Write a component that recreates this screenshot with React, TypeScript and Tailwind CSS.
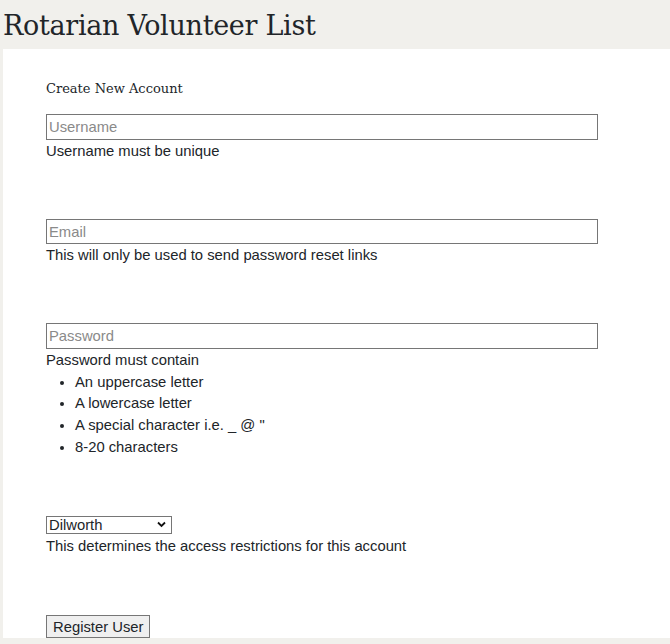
import { useState } from "react";

const sans = "font-['Helvetica_Neue','Liberation_Sans',Arial,sans-serif]";
const slab = "font-['DejaVu_Serif','Liberation_Serif',serif]";

export default function App() {
  const [branch, setBranch] = useState("Dilworth");

  return (
    <div className="min-h-[644px] bg-[#f1f0ec] text-[#212529]">
      {/* Header */}
      <h1 className={`${slab} h-[49px] pl-[3px] pt-[8px] text-[27px] leading-[36px] tracking-[-0.3px]`}>
        Rotarian Volunteer List
      </h1>

      {/* Form panel */}
      <div className={`${sans} ml-[3px] bg-white pl-[43px] pt-[29px] text-[14.8px] leading-[21.7px]`}>
        <p className={`${slab} mb-[14px] text-[13px] leading-[21.6px]`}>Create New Account</p>

        <div className="mb-[57px]">
          <input
            type="text"
            placeholder="Username"
            className="block h-[26px] w-[552px] border border-[#767676] px-[2px] text-[14.8px] outline-none placeholder:text-[#8a8a8a]"
          />
          <p className="mt-[1px]">Username must be unique</p>
        </div>

        <div className="mb-[56px]">
          <input
            type="email"
            placeholder="Email"
            className="block h-[25px] w-[552px] border border-[#767676] px-[2px] text-[14.8px] outline-none placeholder:text-[#8a8a8a]"
          />
          <p className="mt-[1px]">This will only be used to send password reset links</p>
        </div>

        <div className="mb-[57px]">
          <input
            type="password"
            placeholder="Password"
            className="block h-[26px] w-[552px] border border-[#767676] px-[2px] text-[14.8px] outline-none placeholder:text-[#8a8a8a]"
          />
          <p className="mt-[1px]">Password must contain</p>
          <ul className="list-disc pl-[29px]">
            <li>An uppercase letter</li>
            <li>A lowercase letter</li>
            <li>A special character i.e. _ @ "</li>
            <li>8-20 characters</li>
          </ul>
        </div>

        <div className="mb-[58px]">
          <div className="relative w-[126px]">
            <select
              value={branch}
              onChange={(e) => setBranch(e.target.value)}
              className="block h-[18px] w-[126px] appearance-none rounded-none border border-[#767676] bg-white pl-[2px] text-[14.8px] leading-[16px] outline-none"
            >
              <option>Dilworth</option>
              <option>Myers Park</option>
              <option>Charlotte</option>
            </select>
            <svg
              className="pointer-events-none absolute right-[6px] top-[5px]"
              width="9"
              height="7"
              viewBox="0 0 9 7"
            >
              <path d="M1 1.5 L4.5 5 L8 1.5" fill="none" stroke="#111" strokeWidth="1.8" />
            </svg>
          </div>
          <p className="mt-[2px]">This determines the access restrictions for this account</p>
        </div>

        <button
          type="button"
          className="h-[23px] border border-[#767676] bg-[#efefef] px-[6px] text-[14.8px] leading-[20px]"
        >
          Register User
        </button>
      </div>
      <div className="h-[5px]" />
    </div>
  );
}
